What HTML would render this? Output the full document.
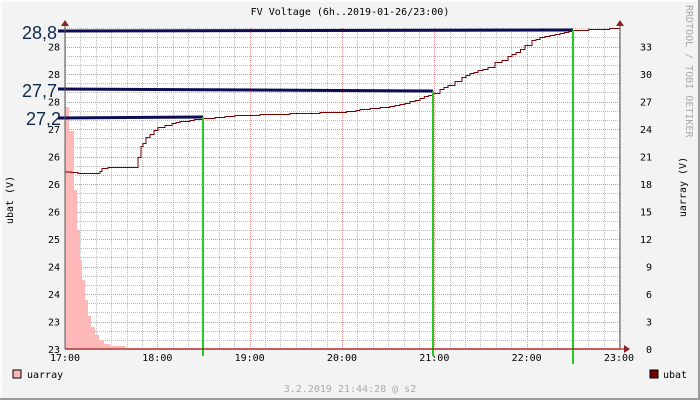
<!DOCTYPE html>
<html><head><meta charset="utf-8"><style>
html,body{margin:0;padding:0;background:#f3f3f3}
svg{display:block}
text{font-family:"DejaVu Sans Mono","Liberation Mono",monospace;font-size:10px}
</style></head><body>
<svg id="s" width="700" height="400" xmlns="http://www.w3.org/2000/svg">
<rect width="700" height="400" fill="#f3f3f3"/>
<rect x="0" y="0" width="700" height="2" fill="#fcfcfc"/>
<rect x="0" y="0" width="2" height="400" fill="#fcfcfc"/>
<rect x="698" y="0" width="2" height="400" fill="#9b9b9b"/>
<rect x="0" y="398" width="700" height="2" fill="#9b9b9b"/>
<rect x="65" y="28" width="555" height="321" fill="#fff"/>
<g id="grid"></g>
<path d="M65,349 L65,107 L69,107 L69,131 L74,131 L74,190 L77,190 L77,230 L80,230 L80,260 L82,260 L82,280 L85,280 L85,300 L88,300 L88,316 L91,316 L91,327 L95,327 L95,335 L99,335 L99,340 L104,340 L104,344 L110,344 L110,346 L125,346 L125,348 L620,348 L620,349 Z" fill="#ffb8b8"/>
<path id="ub" fill="none" stroke="#7a0000" stroke-width="1"/>
<g stroke="#0d0d55" stroke-width="3">
<line x1="58" y1="31" x2="573" y2="30"/>
<line x1="58" y1="89" x2="433" y2="91"/>
<line x1="58" y1="118" x2="203" y2="117"/>
</g>
<g stroke="#22cc22" stroke-width="2">
<line x1="203" y1="117" x2="203" y2="356"/>
<line x1="433" y1="91" x2="433" y2="356"/>
<line x1="573" y1="30" x2="573" y2="364"/>
</g>
<g fill="#0d2a4a">
<text x="22" y="39" style="font-family:'Liberation Sans',sans-serif;font-size:18px">28,8</text>
<text x="22" y="97" style="font-family:'Liberation Sans',sans-serif;font-size:18px">27,7</text>
<text x="26" y="125" style="font-family:'Liberation Sans',sans-serif;font-size:18px">27,2</text>
</g>
<line x1="65" y1="349" x2="625" y2="349" stroke="#8b0000"/>
<line x1="65" y1="349" x2="65" y2="23" stroke="#555"/>
<line x1="620" y1="349" x2="620" y2="23" stroke="#555"/>
<path d="M61,26 L65,20 L69,26Z M616,26 L620,20 L624,26Z M624,345 L630,349 L624,353Z" fill="#8b2222"/>
<g id="lab"></g>
<text x="350" y="15" text-anchor="middle">FV Voltage (6h..2019-01-26/23:00)</text>
<text transform="translate(13,200) rotate(-90)" text-anchor="middle">ubat (V)</text>
<text transform="translate(686,187) rotate(-90)" text-anchor="middle">uarray (V)</text>
<text transform="translate(686,5) rotate(90)" fill="#aaa">RRDTOOL / TOBI OETIKER</text>
<rect x="13" y="370" width="8" height="8" fill="#ffb8b8" stroke="#000"/>
<text x="27" y="378">uarray</text>
<rect x="650" y="370" width="8" height="8" fill="#7a0000" stroke="#000"/>
<text x="663" y="378">ubat</text>
<text x="350" y="392" text-anchor="middle" fill="#aaa">3.2.2019 21:44:28 @ s2</text>
</svg>
<script>
var ns="http://www.w3.org/2000/svg",g=document.getElementById('grid'),L=document.getElementById('lab');
function ln(x1,y1,x2,y2,c){var l=document.createElementNS(ns,'line');l.setAttribute('x1',x1);l.setAttribute('y1',y1);l.setAttribute('x2',x2);l.setAttribute('y2',y2);l.setAttribute('stroke',c);l.setAttribute('stroke-dasharray','1,1');g.appendChild(l);}
function tx(x,y,t,a){var e=document.createElementNS(ns,'text');e.setAttribute('x',x);e.setAttribute('y',y);e.setAttribute('text-anchor',a);e.textContent=t;L.appendChild(e);}
var hs=92.33;
for(var i=0;i<=36;i++){var x=Math.round(65+i*hs/6)+.5;ln(x,28,x,349,i%6==0?'#e09090':'#bbb');}
var ys=27.5;
for(var j=0;j<=35;j++){var y=Math.round(349-j*ys/3)+.5;if(y<28)break;ln(65,y,620,y,j%3==0?'#e09090':'#bbb');}
var lv=['23','23','24','24','25','26','26','26','27','28','28','28'];
for(var k=0;k<12;k++){var y=349-k*ys;tx(60,y+4,lv[k],'end');tx(652,y+4,String(k*3),'end');}
var hl=['17:00','18:00','19:00','20:00','21:00','22:00','23:00'];
for(var h=0;h<7;h++)tx(65+h*hs,361,hl[h],'middle');
// stepped ubat line
var pts=[[65,172],[77,172],[78,173],[98,173],[100,171],[102,168],[108,167],[137,167],[138,157],[141,146],[143,143],[146,137],[150,134],[154,130],[158,127],[165,125],[172,123],[180,121],[190,120],[203,118],[215,117],[240,115],[270,114],[300,113],[330,112],[352,111],[360,109],[370,108],[390,106],[400,104],[410,101],[420,98],[433,93],[440,89],[448,85],[455,81],[462,77],[470,73],[478,70],[488,67],[495,62],[502,60],[508,56],[516,52],[525,45],[532,40],[540,37],[550,35],[560,33],[573,30],[620,28]];
var d="M65,172",cx=65,cy=172;
for(var p=1;p<pts.length;p++){var tx2=pts[p][0],ty=pts[p][1];var n=Math.max(1,Math.round((tx2-cx)/5));for(var q=1;q<=n;q++){var nx=cx+(tx2-cx)*q/n,ny=Math.round(cy+(ty-cy)*q/n)+.5;d+=" H"+nx.toFixed(1)+" V"+ny;}cx=tx2;cy=ty;}
document.getElementById('ub').setAttribute('d',d);
</script>
</body></html>
